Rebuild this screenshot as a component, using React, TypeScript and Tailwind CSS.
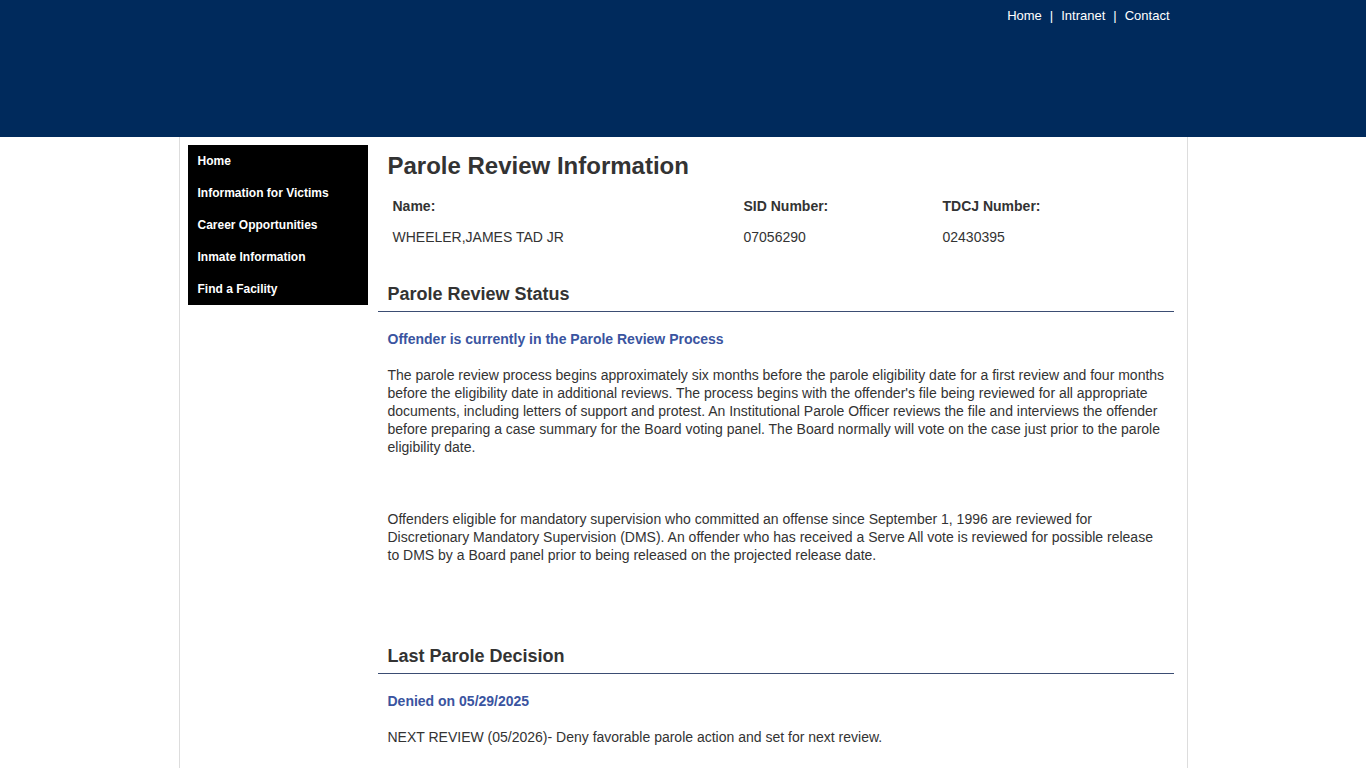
const navItems = ["Home", "Information for Victims", "Career Opportunities", "Inmate Information", "Find a Facility"];

export default function App() {
  return (
    <div className="min-h-[768px] bg-white text-[#333] font-['Liberation_Sans',Arial,sans-serif]">
      <div className="h-[137px] bg-[#002a5c]">
        <div className="w-[1009px] mx-auto flex justify-end pr-[18px] pt-[8px] text-[13px] text-white leading-[15px]">
          <span>Home</span>
          <span className="px-[8px]">|</span>
          <span>Intranet</span>
          <span className="px-[8px]">|</span>
          <span>Contact</span>
        </div>
      </div>

      <div className="w-[1009px] mx-auto min-h-[631px] border-x border-[#dddddd] flex pl-[8px] pr-[13px] pt-[8px]">
        <div className="w-[180px] h-[160px] bg-black shrink-0">
          {navItems.map((item) => (
            <div key={item} className="h-[32px] pl-[10px] flex items-center text-[12px] font-bold text-white">
              {item}
            </div>
          ))}
        </div>

        <div className="ml-[10px] flex-1">
          <h1 className="px-[10px] pt-[7px] text-[24px] leading-[28px] font-bold text-[#333]">Parole Review Information</h1>

          <div className="px-[10px] mt-[17px] text-[14px]">
            <div className="grid grid-cols-[351px_199px_1fr] font-bold leading-[18px] pl-[5px]">
              <span>Name:</span>
              <span>SID Number:</span>
              <span>TDCJ Number:</span>
            </div>
            <div className="grid grid-cols-[351px_199px_1fr] leading-[18px] pl-[5px] mt-[13px]">
              <span>WHEELER,JAMES TAD JR</span>
              <span>07056290</span>
              <span>02430395</span>
            </div>
          </div>

          <h2 className="mt-[37px] px-[10px] text-[18px] leading-[22px] font-bold pb-[6px] border-b border-[#3b4d73]">Parole Review Status</h2>

          <div className="pl-[10px] pr-[8px] text-[14px] leading-[18px]">
            <p className="mt-[18px] font-bold text-[#3a54a0]">Offender is currently in the Parole Review Process</p>
            <p className="mt-[18px]">
              The parole review process begins approximately six months before the parole eligibility date for a first review and four months before the eligibility date in additional reviews. The process begins with the offender's file being reviewed for all appropriate documents, including letters of support and protest. An Institutional Parole Officer reviews the file and interviews the offender before preparing a case summary for the Board voting panel. The Board normally will vote on the case just prior to the parole eligibility date.
            </p>
            <p className="mt-[54px]">
              Offenders eligible for mandatory supervision who committed an offense since September 1, 1996 are reviewed for Discretionary Mandatory Supervision (DMS). An offender who has received a Serve All vote is reviewed for possible release to DMS by a Board panel prior to being released on the projected release date.
            </p>
          </div>

          <h2 className="mt-[81px] px-[10px] text-[18px] leading-[22px] font-bold pb-[6px] border-b border-[#3b4d73]">Last Parole Decision</h2>

          <div className="pl-[10px] pr-[8px] text-[14px] leading-[18px]">
            <p className="mt-[18px] font-bold text-[#3a54a0]">Denied on 05/29/2025</p>
            <p className="mt-[18px]">NEXT REVIEW (05/2026)- Deny favorable parole action and set for next review.</p>
          </div>
        </div>
      </div>
    </div>
  );
}
